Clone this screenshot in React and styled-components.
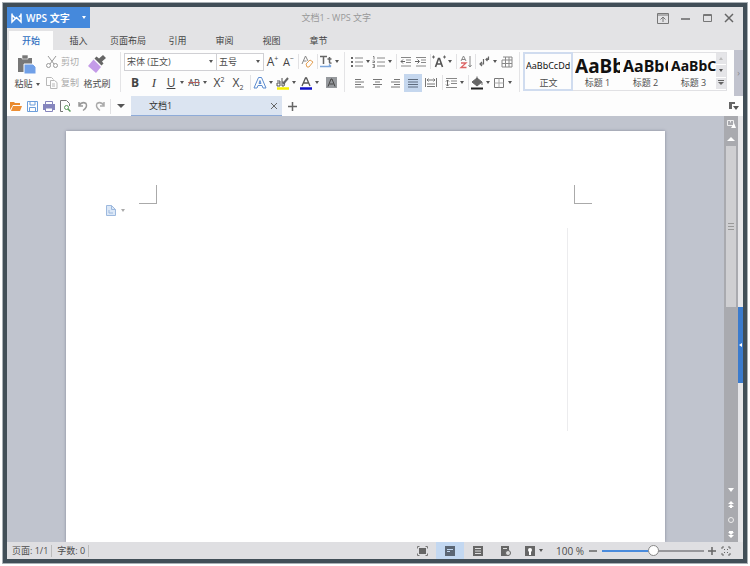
import React from "react";
import styled, { createGlobalStyle } from "styled-components";

const GlobalStyle = createGlobalStyle`
    * {
        box-sizing: border-box;
    }
    body {
        margin: 0;
        background: #fff;
        color: #4c4c4c;
        font: 9px/12px "Open Sans", "Noto Sans CJK SC", sans-serif;
    }
    button, select, input {
        margin: 0;
        padding: 0;
        border: 0;
        background: none;
        color: inherit;
        font: inherit;
    }
`;

const Frame = styled.div`
    display: flex;
    flex-direction: column;
    height: calc(100vh - 4px);
    margin: 2px;
    border: 5px solid #414e57;
    outline: 1px solid #a9b0b5;
    outline-offset: -1px;
`;

const Svg = styled.svg`
    display: block;
    flex: none;
    fill: none;
    stroke: #666;
    overflow: visible;
`;

const Icon = ({ w = 14, h = 14, children }) => (
    <Svg width={w} height={h} viewBox={`0 0 ${w} ${h}`} aria-hidden="true">
        {children}
    </Svg>
);

const Caret = styled.span`
    flex: none;
    border: solid transparent;
    border-width: ${(p) => (p.$big ? "4px 4px 0" : "3px 2px 0")};
    border-top-color: ${(p) => p.$color || "#555"};
`;

/* title bar */

const TitleBar = styled.header`
    display: grid;
    grid-template-columns: 40% auto 1fr;
    align-items: start;
    height: 24px;
    flex: none;
    background: #e3e3e5;
`;

const AppButton = styled.button`
    display: flex;
    align-items: center;
    width: 83px;
    height: 21px;
    padding-left: 4px;
    gap: 4px;
    background: #4589dc;
    color: #fff;
    font-size: 10px;
    font-weight: 600;
    white-space: nowrap;

    ${Caret} {
        margin-left: auto;
        margin-right: 4px;
    }
`;

const Title = styled.h1`
    margin: 0;
    font-size: 9px;
    font-weight: 400;
    line-height: 21px;
    color: #999;
`;

const WindowButtons = styled.div`
    display: flex;
    justify-content: flex-end;
    padding: 4px 8px 0 0;
    gap: 10px;
`;

const PlainButton = styled.button`
    display: flex;
    align-items: center;
    justify-content: center;
    min-width: ${(p) => p.$w || 12}px;
    height: 14px;
`;

/* ribbon */

const Tabs = styled.nav`
    display: flex;
    flex: none;
    height: 19px;
    padding-left: 2px;
    background: #e3e3e5;
`;

const Tab = styled.button`
    min-width: ${(p) => (p.$active ? 44 : 47)}px;
    margin-right: ${(p) => (p.$active ? 2 : 0)}px;
    padding: 0 8px;
    background: ${(p) => (p.$active ? "#fdfdfd" : "none")};
    color: ${(p) => (p.$active ? "#2f6fc0" : "#444")};
    font-weight: ${(p) => (p.$active ? 500 : 400)};
`;

const Ribbon = styled.div`
    display: flex;
    flex: none;
    height: 46px;
    background: #fdfdfd;
    overflow: hidden;
`;

const Group = styled.div`
    display: flex;
    flex: none;
    margin-top: 2px;
    height: 40px;
    padding: ${(p) => p.$pad || "0"};
    border-right: 1px solid #e4e4e6;
`;

const Stack = styled.div`
    display: flex;
    flex-direction: column;
    justify-content: space-between;
`;

const Row = styled.div`
    display: flex;
    align-items: center;
    height: 19px;
    gap: ${(p) => p.$gap || 0}px;
    padding-left: ${(p) => p.$indent || 0}px;
`;

const BigButton = styled.button`
    display: flex;
    flex-direction: column;
    align-items: center;
    justify-content: space-between;
    width: 30px;
    padding: 3px 0 2px;
    white-space: nowrap;

    span {
        display: flex;
        align-items: center;
        gap: 3px;
    }
`;

const LabelButton = styled.button`
    display: flex;
    align-items: center;
    width: 36px;
    height: 19px;
    gap: 3px;
    color: #aaa;
    white-space: nowrap;
`;

const Tool = styled.button`
    display: flex;
    align-items: center;
    justify-content: center;
    flex: none;
    width: ${(p) => p.$w || 15}px;
    height: 18px;
    background: ${(p) => (p.$on ? "#c5d7ee" : "none")};
    font-size: 12px;
    line-height: 16px;
    color: #444;
`;

const Split = styled(Tool)`
    width: 22px;
    gap: 2px;
    justify-content: flex-start;
`;

const Glyph = styled.span`
    width: 14px;
    font-weight: ${(p) => (p.$bold ? 700 : 400)};
    font-style: ${(p) => (p.$italic ? "italic" : "normal")};
    font-family: ${(p) => (p.$italic ? '"Liberation Serif", serif' : "inherit")};
    text-decoration: ${(p) => p.$line || "none"};
    text-align: center;
    white-space: nowrap;
    font-size: ${(p) => p.$size || 12}px;
    sup, sub {
        font-size: 7px;
        line-height: 0;
    }
`;

const Sep = styled.span`
    flex: none;
    width: 1px;
    height: 15px;
    margin: 0 1px 0 2px;
    background: #e2e2e4;
`;

const Picker = styled.label`
    display: flex;
    align-items: center;
    width: ${(p) => p.$w}px;
    height: 18px;
    padding-right: 3px;
    border: 1px solid #d0d0d4;
    background: #fff;
    & + & {
        margin-left: -1px;
    }
    select {
        flex: 1;
        min-width: 0;
        padding-left: 2px;
        appearance: none;
        outline: none;
    }
`;

const Gallery = styled.div`
    display: flex;
    flex: none;
    height: 39px;
    margin: 2px 0 0 3px;
    border: 1px solid #e1e1e4;
`;

const StyleCard = styled.button`
    display: flex;
    flex-direction: column;
    width: 48px;
    height: 37px;
    padding: ${(p) => (p.$active ? "0 1px 0 2px" : "0 0 0 3px")};
    overflow: hidden;
    outline: ${(p) => (p.$active ? "2px solid #d0dcef" : "none")};
    outline-offset: -1px;
    text-align: center;

    b {
        width: 100%;
        height: 24px;
        overflow: hidden;
        color: #111;
        font-family: "Noto Sans", sans-serif;
        font-size: ${(p) => p.$size}px;
        font-weight: ${(p) => (p.$active ? 400 : 700)};
        line-height: 26px;
        text-align: left;
        white-space: nowrap;
    }
    span {
        width: 100%;
    }
`;

const GalleryScroll = styled.div`
    display: flex;
    flex-direction: column;
    width: 10px;
    button {
        display: flex;
        align-items: center;
        justify-content: center;
        flex: 1;
        background: #e5e5e8;
        border-bottom: 1px solid #fff;
    }
`;

const RibbonMore = styled.button`
    width: 9px;
    flex: none;
    margin-left: auto;
    background: #c1c3ce;
    color: #888;
`;

/* document tabs */

const DocBar = styled.div`
    display: flex;
    align-items: center;
    flex: none;
    height: 20px;
    padding-right: 3px;
    background: #fdfdfd;
`;

const QuickTools = styled.div`
    display: flex;
    align-items: center;
    width: 124px;
`;

const DocTab = styled.div`
    display: flex;
    align-items: center;
    justify-content: space-between;
    width: 151px;
    height: 20px;
    padding: 0 2px 0 18px;
    background: #dbe4f1;
    border-bottom: 1px solid #8eabd8;
    color: #333;
`;

const ListButton = styled(PlainButton)`
    margin-left: auto;
`;

/* work area */

const Main = styled.main`
    display: flex;
    flex: 1;
    min-height: 0;
`;

const Desk = styled.div`
    flex: 1;
    display: flex;
    padding: 15px 59px 0;
    background: #c0c4ce;
    overflow: hidden;
`;

const Page = styled.article`
    flex: 1;
    background: #fff;
    box-shadow: 0 0 3px #85889a;
`;

const Corners = styled.div`
    display: flex;
    justify-content: space-between;
    padding: 54px 73px 0;
`;

const Corner = styled.span`
    width: 18px;
    height: 19px;
    border: solid #aaa;
    border-width: ${(p) => (p.$right ? "0 0 1px 1px" : "0 1px 1px 0")};
`;

const PageBody = styled.div`
    display: flex;
    justify-content: space-between;
    align-items: flex-start;
    padding: 0 97px 0 40px;
`;

const PasteOptions = styled.button`
    display: flex;
    align-items: center;
    gap: 5px;
    height: 12px;
`;

const MarginLine = styled.span`
    width: 1px;
    height: 203px;
    margin-top: 24px;
    background: #ececee;
`;

const Scroller = styled.div`
    display: flex;
    flex-direction: column;
    align-items: center;
    flex: none;
    width: 14px;
    background: #a9aaaf;
`;

const Thumb = styled.div`
    display: flex;
    flex: none;
    align-items: center;
    justify-content: center;
    width: 10px;
    height: 161px;
    margin-bottom: auto;
    background: #cfcfd2;
`;

const ScrollButton = styled(PlainButton)`
    height: 15px;
    width: 14px;
    flex: none;
`;

const SideStrip = styled.div`
    width: 5px;
    flex: none;
    padding-top: 191px;
    background: #e6e6e9;
    button {
        display: flex;
        align-items: center;
        justify-content: center;
        width: 5px;
        height: 76px;
        background: #3b7bcd;
    }
`;

/* status bar */

const StatusBar = styled.footer`
    display: flex;
    align-items: center;
    flex: none;
    height: 17px;
    padding: 0 9px 0 5px;
    background: #dfdfe2;
    white-space: nowrap;
`;

const Info = styled.span`
    margin-right: 5px;
    padding-right: 3px;
    border-right: 1px solid #bbb;
`;

const Views = styled.div`
    display: flex;
    margin-left: auto;
`;

const ViewButton = styled.button`
    display: flex;
    align-items: center;
    justify-content: center;
    width: 28px;
    height: 17px;
    gap: 4px;
    background: ${(p) => (p.$on ? "#c3d8f1" : "none")};
`;

const ZoomText = styled.span`
    width: 28px;
    margin: 0 3px 0 8px;
    font-size: 10px;
`;

const ZoomRange = styled.input`
    width: 102px;
    height: 12px;
    margin: 0 2px 0 3px;
    appearance: none;
    &::-webkit-slider-runnable-track {
        height: 2px;
        background: linear-gradient(90deg, #4a8bdc 50%, #98989c 50%);
    }
    &::-webkit-slider-thumb {
        appearance: none;
        width: 11px;
        height: 11px;
        margin-top: -5px;
        border: 1px solid #888;
        border-radius: 50%;
        background: #fff;
    }
`;

const Bars = ({ rows, color = "#777" }) => (
    <Icon>
        <path
            d={rows.map(([x, w], i) => `M${x} ${3.5 + i * 2.5}h${w}`).join("")}
            stroke={color}
            strokeWidth="1"
        />
    </Icon>
);

const SplitTool = ({ label, children }) => (
    <Split aria-label={label}>
        {children}
        <Caret />
    </Split>
);

const tabs = ["开始", "插入", "页面布局", "引用", "审阅", "视图", "章节"];

const cards = [
    { name: "正文", sample: "AaBbCcDd", size: 9 },
    { name: "标题 1", sample: "AaBb", size: 19 },
    { name: "标题 2", sample: "AaBbC", size: 16 },
    { name: "标题 3", sample: "AaBbC", size: 14 },
];

function Header() {
    return (
        <TitleBar>
            <AppButton>
                <Icon w={11} h={10}>
                    <path d="M1 0.5V9L5.5 4.5L10 9V0.5M1 2L4 5M10 2L8 4" stroke="#fff" strokeWidth="1.500" />
                </Icon>
                WPS 文字
                <Caret $color="#fff" />
            </AppButton>
            <Title>文档1 - WPS 文字</Title>
            <WindowButtons>
                <PlainButton aria-label="功能区">
                    <Icon w={12} h={11}>
                        <path d="M0.5 0.5h11v10H0.5zM0.5 2h11M6 9V4.5M3.5 6.5L6 4l2.5 2.5" stroke="#777" />
                    </Icon>
                </PlainButton>
                <PlainButton aria-label="最小化">
                    <Icon w={9} h={10}>
                        <path d="M0 6h9" strokeWidth="1.5" />
                    </Icon>
                </PlainButton>
                <PlainButton aria-label="最大化">
                    <Icon w={9} h={8}>
                        <path d="M0.5 0.5h8v7h-8zM0.5 1.5h8" stroke="#777" />
                    </Icon>
                </PlainButton>
                <PlainButton aria-label="关闭">
                    <Icon w={12} h={8}>
                        <path d="M2 0l8 8M10 0L2 8" strokeWidth="1.5" />
                    </Icon>
                </PlainButton>
            </WindowButtons>
        </TitleBar>
    );
}

function ClipboardGroup() {
    return (
        <Group $pad="0 8px 0 5px">
            <BigButton>
                <Icon w={20} h={19}>
                    <path d="M1 3h14v14H1z" fill="#777" stroke="none" />
                    <path d="M5 0h6v4H5z" fill="#777" stroke="#fdfdfd" strokeWidth=".6" />
                    <path d="M7 9h9l3 3v7H7z" fill="#70a0e8" stroke="#fdfdfd" />
                </Icon>
                <span>
                    粘贴
                    <Caret />
                </span>
            </BigButton>
            <Stack>
                <Row $indent={4}>
                    <LabelButton>
                        <Icon w={12} h={12}>
                            <path d="M2 0l6 8M10 0L4 8" stroke="#999" />
                            <circle cx="2.5" cy="9.5" r="2" stroke="#999" />
                            <circle cx="9.5" cy="9.5" r="2" stroke="#999" />
                        </Icon>
                        剪切
                    </LabelButton>
                </Row>
                <Row $indent={4}>
                    <LabelButton>
                        <Icon w={12} h={12}>
                            <path d="M4 8.5H.5v-8h5l2 2M4.5 3.5h4l2.5 2v6H4.5zM6 7h3M6 9h3" stroke="#b8b8b8" />
                        </Icon>
                        复制
                    </LabelButton>
                </Row>
            </Stack>
            <BigButton>
                <Icon w={18} h={18}>
                    <path d="M15 0l3 3-4 3.500 1.500 2-2 2-7-7 2-2 2.500 2z" fill="#666" stroke="none" />
                    <path d="M5.500 4.500l7.500 7.500-5 6-8-7z" fill="#c49be8" stroke="none" />
                </Icon>
                格式刷
            </BigButton>
        </Group>
    );
}

function FontGroup() {
    return (
        <Group $pad="0 3px 0 3px">
            <Stack>
                <Row>
                    <Picker $w={93}>
                        <select aria-label="字体">
                            <option>宋体 (正文)</option>
                        </select>
                        <Caret />
                    </Picker>
                    <Picker $w={48}>
                        <select aria-label="字号">
                            <option>五号</option>
                        </select>
                        <Caret />
                    </Picker>
                    <Tool $w={17} aria-label="增大字号">
                        <Glyph>A<sup>+</sup></Glyph>
                    </Tool>
                    <Tool aria-label="减小字号">
                        <Glyph $size={11}>A<sup>−</sup></Glyph>
                    </Tool>
                    <Sep />
                    <Tool aria-label="清除格式">
                        <Icon>
                            <path d="M1 9L4.5 1L7 6M2.5 6h3" stroke="#888" />
                            <path d="M5 9l4-4 3 2-4 5H6z" stroke="#e5a154" />
                        </Icon>
                    </Tool>
                    <Sep />
                    <SplitTool label="拼音指南">
                        <Icon>
                            <path d="M1 1.500h7M4.5 2v7M8.500 4h4M10.500 2v5q0 1.500 2 1" strokeWidth="1.5" />
                            <path d="M1 11.500h11M10 9.500l2 2" stroke="#7da6dc" strokeWidth="1.500" />
                        </Icon>
                    </SplitTool>
                </Row>
                <Row $indent={2} $gap={1}>
                    <Tool $w={18} aria-label="加粗">
                        <Glyph $bold>B</Glyph>
                    </Tool>
                    <Tool $w={18} aria-label="倾斜">
                        <Glyph $italic $size={13}>I</Glyph>
                    </Tool>
                    <SplitTool label="下划线">
                        <Glyph $line="underline">U</Glyph>
                    </SplitTool>
                    <SplitTool label="删除线">
                        <Glyph $line="line-through #b65c5c" $size={9}>AB</Glyph>
                    </SplitTool>
                    <Tool $w={18} aria-label="上标">
                        <Glyph>X<sup>2</sup></Glyph>
                    </Tool>
                    <Tool $w={18} aria-label="下标">
                        <Glyph>X<sub>2</sub></Glyph>
                    </Tool>
                    <Sep />
                    <SplitTool label="文字效果">
                        <Icon>
                            <path d="M1 12L5.5 1.5h3L13 12h-3L9 9.5H5L4 12zM6 7.5h2L7 4.5z" stroke="#5a8bd0" />
                        </Icon>
                    </SplitTool>
                    <SplitTool label="突出显示">
                        <Icon>
                            <path d="M1 5h3v5H1V7h3M6 2v8h2q2-4-2-4" stroke="#555" />
                            <path d="M12 2L7 8" strokeWidth="2" />
                            <path d="M1 12.5h12" stroke="#f7f000" strokeWidth="2.5" />
                        </Icon>
                    </SplitTool>
                    <SplitTool label="字体颜色">
                        <Icon>
                            <path d="M3 10L6.5 2h1L11 10M4.5 7h5" stroke="#555" strokeWidth="1.3" />
                            <path d="M1 12.5h12" stroke="#1010c8" strokeWidth="2.5" />
                        </Icon>
                    </SplitTool>
                    <Tool $w={18} aria-label="字符底纹">
                        <Icon w={11} h={11}>
                            <path d="M0 0h11v11H0z" fill="#96999d" stroke="none" />
                            <path d="M2 9.5L5 2h1l3 7.5M3.5 7h4" stroke="#444" />
                        </Icon>
                    </Tool>
                </Row>
            </Stack>
        </Group>
    );
}

function ParagraphGroup() {
    return (
        <Group $pad="0 5px 0 5px">
            <Stack>
                <Row>
                    <SplitTool label="项目符号">
                        <Icon>
                            <path d="M1 3h2M1 7h2M1 11h2" strokeWidth="2" />
                            <path d="M5 3h8M5 7h8M5 11h8" stroke="#888" />
                        </Icon>
                    </SplitTool>
                    <SplitTool label="编号">
                        <Icon>
                            <path d="M1 1.5h1v3M.5 6h2v1.5h-2M.5 9.5h2v3h-2M1 11h1" strokeWidth=".8" />
                            <path d="M5 3h8M5 7h8M5 11h8" stroke="#888" />
                        </Icon>
                    </SplitTool>
                    <Sep />
                    <Tool aria-label="减少缩进">
                        <Icon>
                            <path d="M2 2.5h10M7 5h5M7 7.5h5M2 11h10" stroke="#888" />
                            <path d="M6 6.5H2M4 4.5l-2 2 2 2" />
                        </Icon>
                    </Tool>
                    <Tool aria-label="增加缩进">
                        <Icon>
                            <path d="M2 2.5h10M7 5h5M7 7.5h5M2 11h10" stroke="#888" />
                            <path d="M1 6.5h4M3.5 4.5l2 2-2 2" />
                        </Icon>
                    </Tool>
                    <Sep />
                    <SplitTool label="中文版式">
                        <Icon>
                            <path d="M3.500 12L6.5 3.500h1L10.500 12M5 9h4" strokeWidth="1.6" stroke="#555" />
                            <path d="M0 2h3M1.5 .5v3M11 2h3M12.5 .5v3" />
                        </Icon>
                    </SplitTool>
                    <Sep />
                    <Tool aria-label="排序">
                        <Icon>
                            <path d="M2 6L4.5 1L7 6M3 4.5h3" stroke="#888" />
                            <path d="M2 8h5L2 12.5h5.5" stroke="#d66" strokeWidth="1.3" />
                            <path d="M11 1v11M9.5 10l1.5 2 1.5-2" stroke="#888" />
                        </Icon>
                    </Tool>
                    <Sep />
                    <SplitTool label="显示标记">
                        <Icon>
                            <path d="M11.500 1.500v3H9M10.5 3L9 4.500l1.500 1.500M6.500 4v5H3M5 7L3 9l2 2" strokeWidth="1.2" />
                        </Icon>
                    </SplitTool>
                    <Tool aria-label="网格">
                        <Icon>
                            <path d="M3 2h9v10H2V5M5.5 2v10M9 2v10M2 5h10M2 8.5h10" stroke="#888" />
                        </Icon>
                    </Tool>
                </Row>
                <Row>
                    <Tool $w={18} aria-label="左对齐">
                        <Bars rows={[[3, 6], [3, 9], [3, 6], [3, 9]]} />
                    </Tool>
                    <Tool $w={18} aria-label="居中">
                        <Bars rows={[[3, 9], [5, 5], [3, 9], [5, 5]]} />
                    </Tool>
                    <Tool $w={18} aria-label="右对齐">
                        <Bars rows={[[6, 6], [3, 9], [6, 6], [3, 9]]} />
                    </Tool>
                    <Tool $w={18} $on aria-label="两端对齐">
                        <Bars rows={[[2, 10], [2, 10], [2, 10], [2, 10]]} color="#5d6b7e" />
                    </Tool>
                    <Tool $w={18} aria-label="分散对齐">
                        <Icon>
                            <path d="M1.5 2v9M12.5 2v9M3 4h8M4.5 2.5L3 4l1.5 1.5M9.5 2.5L11 4 9.5 5.5M3 8h8M3 10.5h8" stroke="#777" />
                        </Icon>
                    </Tool>
                    <Sep />
                    <SplitTool label="行距">
                        <Icon>
                            <path d="M2 2.5h11M7 5h6M7 7.5h6M2 11.5h11" stroke="#888" />
                            <path d="M3.5 4v6M2 5.5L3.5 4 5 5.5M2 8.5L3.5 10 5 8.5" />
                        </Icon>
                    </SplitTool>
                    <Sep />
                    <SplitTool label="底纹颜色">
                        <Icon>
                            <path d="M2 6l5-4 5 4-5 4zM12 6v3" fill="#666" />
                            <path d="M7 4V.5" />
                            <path d="M1 12.5h12" stroke="#222" strokeWidth="2" />
                        </Icon>
                    </SplitTool>
                    <SplitTool label="边框">
                        <Icon>
                            <path d="M2.5 2.5h9v9h-9z" stroke="#777" />
                            <path d="M7 2.5v9M2.5 7h9" stroke="#aaa" />
                        </Icon>
                    </SplitTool>
                </Row>
            </Stack>
        </Group>
    );
}

function StyleGallery() {
    return (
        <Gallery>
            {cards.map((c, i) => (
                <StyleCard key={c.name} $active={i === 0} $size={c.size}>
                    <b>{c.sample}</b>
                    <span>{c.name}</span>
                </StyleCard>
            ))}
            <GalleryScroll>
                <button aria-label="上一行">
                    <Icon w={4} h={3}>
                        <path d="M0 3l2-3 2 3z" fill="#bbb" stroke="none" />
                    </Icon>
                </button>
                <button aria-label="下一行">
                    <Caret />
                </button>
                <button aria-label="更多样式">
                    <Icon w={6} h={6}>
                        <path d="M0 .5h6" />
                        <path d="M0 2l3 3 3-3z" fill="#666" stroke="none" />
                    </Icon>
                </button>
            </GalleryScroll>
        </Gallery>
    );
}

function Quick() {
    return (
        <QuickTools>
            <Tool $w={17} aria-label="打开">
                <Icon w={12} h={10}>
                    <path d="M0 9V1h4l1 1h5v2H3z" fill="#e98a2e" stroke="none" />
                    <path d="M3 5h9l-2 5H1z" fill="#ed8f35" stroke="none" />
                </Icon>
            </Tool>
            <Tool $w={17} aria-label="保存">
                <Icon w={11} h={11}>
                    <path d="M.5 .5h10v10H.5zM3 .5v3.5h5V.5M2.5 10.5V6.5h6v4" stroke="#6c9edb" />
                </Icon>
            </Tool>
            <Tool $w={16} aria-label="打印">
                <Icon w={12} h={11}>
                    <path d="M0 3h12v6H0z" fill="#8585bd" stroke="none" />
                    <path d="M2.5 3V.5h7V3M2.5 7h7v3.5h-7z" stroke="#8585bd" fill="#fdfdfd" />
                </Icon>
            </Tool>
            <Tool $w={17} aria-label="打印预览">
                <Icon w={11} h={12}>
                    <path d="M3 11.5H.5V.5h6l3 3V6" stroke="#777" />
                    <circle cx="6.5" cy="7.5" r="2" stroke="#5a9a5a" />
                    <path d="M8 9l2.5 2.5" stroke="#5a9a5a" strokeWidth="1.5" />
                </Icon>
            </Tool>
            <Tool $w={17} aria-label="撤销">
                <Icon w={10} h={10}>
                    <path d="M1 1v4h4M1 4.5Q4 0 8 2.5Q10 6 5 9.5" stroke="#999" strokeWidth="1.5" />
                </Icon>
            </Tool>
            <Tool $w={17} aria-label="恢复">
                <Icon w={10} h={10}>
                    <path d="M9 1v4H5M9 4.5Q6 0 2 2.5Q0 6 5 9.5" stroke="#aaa" strokeWidth="1.5" />
                </Icon>
            </Tool>
            <Sep />
            <Tool $w={17} aria-label="自定义">
                <Caret $big />
            </Tool>
        </QuickTools>
    );
}

function Scrollbar() {
    return (
        <Scroller>
            <ScrollButton aria-label="标尺">
                <Icon w={9} h={8}>
                    <path d="M.5 .5h6v5h-6zM3.5 .5v2" stroke="#eee" />
                    <path d="M4 8l3-5 2 5z" fill="#fff" stroke="none" />
                </Icon>
            </ScrollButton>
            <ScrollButton aria-label="向上滚动">
                <Icon w={8} h={4}>
                    <path d="M0 4l4-4 4 4z" fill="#fff" stroke="none" />
                </Icon>
            </ScrollButton>
            <Thumb>
                <Icon w={6} h={8}>
                    <path d="M0 .5h6M0 3.5h6M0 6.5h6" stroke="#999" />
                </Icon>
            </Thumb>
            <ScrollButton aria-label="向下滚动">
                <Icon w={6} h={4}>
                    <path d="M0 0l3 4 3-4z" fill="#fff" stroke="none" />
                </Icon>
            </ScrollButton>
            <ScrollButton aria-label="上一页">
                <Icon w={6} h={7}>
                    <path d="M0 3l3-3 3 3zM0 6l3-3 3 3zM2 6h2v1H2z" fill="#fff" stroke="none" />
                </Icon>
            </ScrollButton>
            <ScrollButton aria-label="浏览对象">
                <Icon w={6} h={6}>
                    <circle cx="3" cy="3" r="2.5" stroke="#eee" />
                </Icon>
            </ScrollButton>
            <ScrollButton aria-label="下一页">
                <Icon w={6} h={7}>
                    <path d="M0 1l3 3 3-3zM0 4l3 3 3-3zM1 0h4v1H1z" fill="#fff" stroke="none" />
                </Icon>
            </ScrollButton>
        </Scroller>
    );
}

function Status() {
    const [zoom, setZoom] = React.useState(100);

    return (
        <StatusBar>
            <Info>页面: 1/1</Info>
            <Info>字数: 0</Info>
            <Views>
                <ViewButton aria-label="全屏">
                    <Icon w={11} h={10}>
                        <path d="M2 2h7v6H2z" fill="#666" stroke="none" />
                        <path d="M.5 2.5V.5h2M8.5 .5h2v2M.5 7.5v2h2M8.5 9.5h2v-2" stroke="#777" />
                    </Icon>
                </ViewButton>
                <ViewButton $on aria-label="页面视图">
                    <Icon w={10} h={10}>
                        <path d="M0 0h10v10H0z" fill="#5b6674" stroke="none" />
                        <path d="M2 3.5h6M2 5.5h3" stroke="#c3d8f1" />
                    </Icon>
                </ViewButton>
                <ViewButton aria-label="大纲视图">
                    <Icon w={10} h={10}>
                        <path d="M0 0h10v10H0z" fill="#666" stroke="none" />
                        <path d="M2 2.5h6M2 5h6M2 7.5h6" stroke="#ddd" />
                    </Icon>
                </ViewButton>
                <ViewButton aria-label="网页视图">
                    <Icon w={10} h={10}>
                        <path d="M0 0h8v10H0z" fill="#666" stroke="none" />
                        <path d="M2 2.5h4" stroke="#ddd" />
                        <circle cx="7" cy="7" r="2.5" fill="#ddd" />
                    </Icon>
                </ViewButton>
                <ViewButton aria-label="护眼模式">
                    <Icon w={10} h={10}>
                        <path d="M0 0h10v10H0z" fill="#666" stroke="none" />
                        <circle cx="5" cy="4" r="2" fill="#fff" stroke="none" />
                        <path d="M5 5v4" stroke="#fff" strokeWidth="2" />
                    </Icon>
                    <Caret />
                </ViewButton>
            </Views>
            <ZoomText>{zoom} %</ZoomText>
            <PlainButton aria-label="缩小">
                <Icon w={8} h={8}>
                    <path d="M0 4h8" strokeWidth="1.5" />
                </Icon>
            </PlainButton>
            <ZoomRange
                type="range"
                min="0"
                max="200"
                value={zoom}
                aria-label="显示比例"
                onChange={(e) => setZoom(Number(e.target.value))}
            />
            <PlainButton aria-label="放大">
                <Icon w={8} h={8}>
                    <path d="M0 4h8M4 0v8" strokeWidth="1.5" />
                </Icon>
            </PlainButton>
            <PlainButton $w={16} aria-label="最佳显示比例">
                <Icon w={8} h={8}>
                    <path d="M0 2V0h2M6 0h2v2M0 6v2h2M6 8h2V6M2 2l1 1M6 2L5 3M2 6l1-1M6 6L5 5" />
                </Icon>
            </PlainButton>
        </StatusBar>
    );
}

export default function App() {
    const [active, setActive] = React.useState(tabs[0]);

    return (
        <>
            <GlobalStyle />
            <Frame>
                <Header />
                <Tabs>
                    {tabs.map((t) => (
                        <Tab key={t} $active={t === active} onClick={() => setActive(t)}>
                            {t}
                        </Tab>
                    ))}
                </Tabs>
                <Ribbon>
                    <ClipboardGroup />
                    <FontGroup />
                    <ParagraphGroup />
                    <StyleGallery />
                    <RibbonMore aria-label="展开">›</RibbonMore>
                </Ribbon>
                <DocBar>
                    <Quick />
                    <DocTab>
                        文档1
                        <PlainButton aria-label="关闭文档">
                            <Icon w={6} h={6}>
                                <path d="M0 0l6 6M6 0L0 6" />
                            </Icon>
                        </PlainButton>
                    </DocTab>
                    <Tool $w={20} aria-label="新建">
                        <Icon w={9} h={9}>
                            <path d="M0 4.5h9M4.5 0v9" strokeWidth="1.5" />
                        </Icon>
                    </Tool>
                    <ListButton aria-label="文档列表">
                        <Icon w={10} h={8}>
                            <path d="M0 0h6v2H3v5H0z" fill="#666" stroke="none" />
                            <path d="M4 4h6L7 8z" fill="#555" stroke="none" />
                        </Icon>
                    </ListButton>
                </DocBar>
                <Main>
                    <Desk>
                        <Page>
                            <Corners>
                                <Corner />
                                <Corner $right />
                            </Corners>
                            <PageBody>
                                <PasteOptions aria-label="选项">
                                    <Icon w={10} h={11}>
                                        <path d="M.5 .5h5l4 4v6h-9z" fill="#dce8f7" stroke="#9db9de" />
                                        <path d="M5.5 .5v4h4M3 5v3h4" stroke="#9db9de" />
                                    </Icon>
                                    <Caret $color="#aaa" />
                                </PasteOptions>
                                <MarginLine />
                            </PageBody>
                        </Page>
                    </Desk>
                    <Scrollbar />
                    <SideStrip>
                        <button aria-label="任务窗格">
                            <Icon w={3} h={4}>
                                <path d="M3 0v4L0 2z" fill="#fff" stroke="none" />
                            </Icon>
                        </button>
                    </SideStrip>
                </Main>
                <Status />
            </Frame>
        </>
    );
}
